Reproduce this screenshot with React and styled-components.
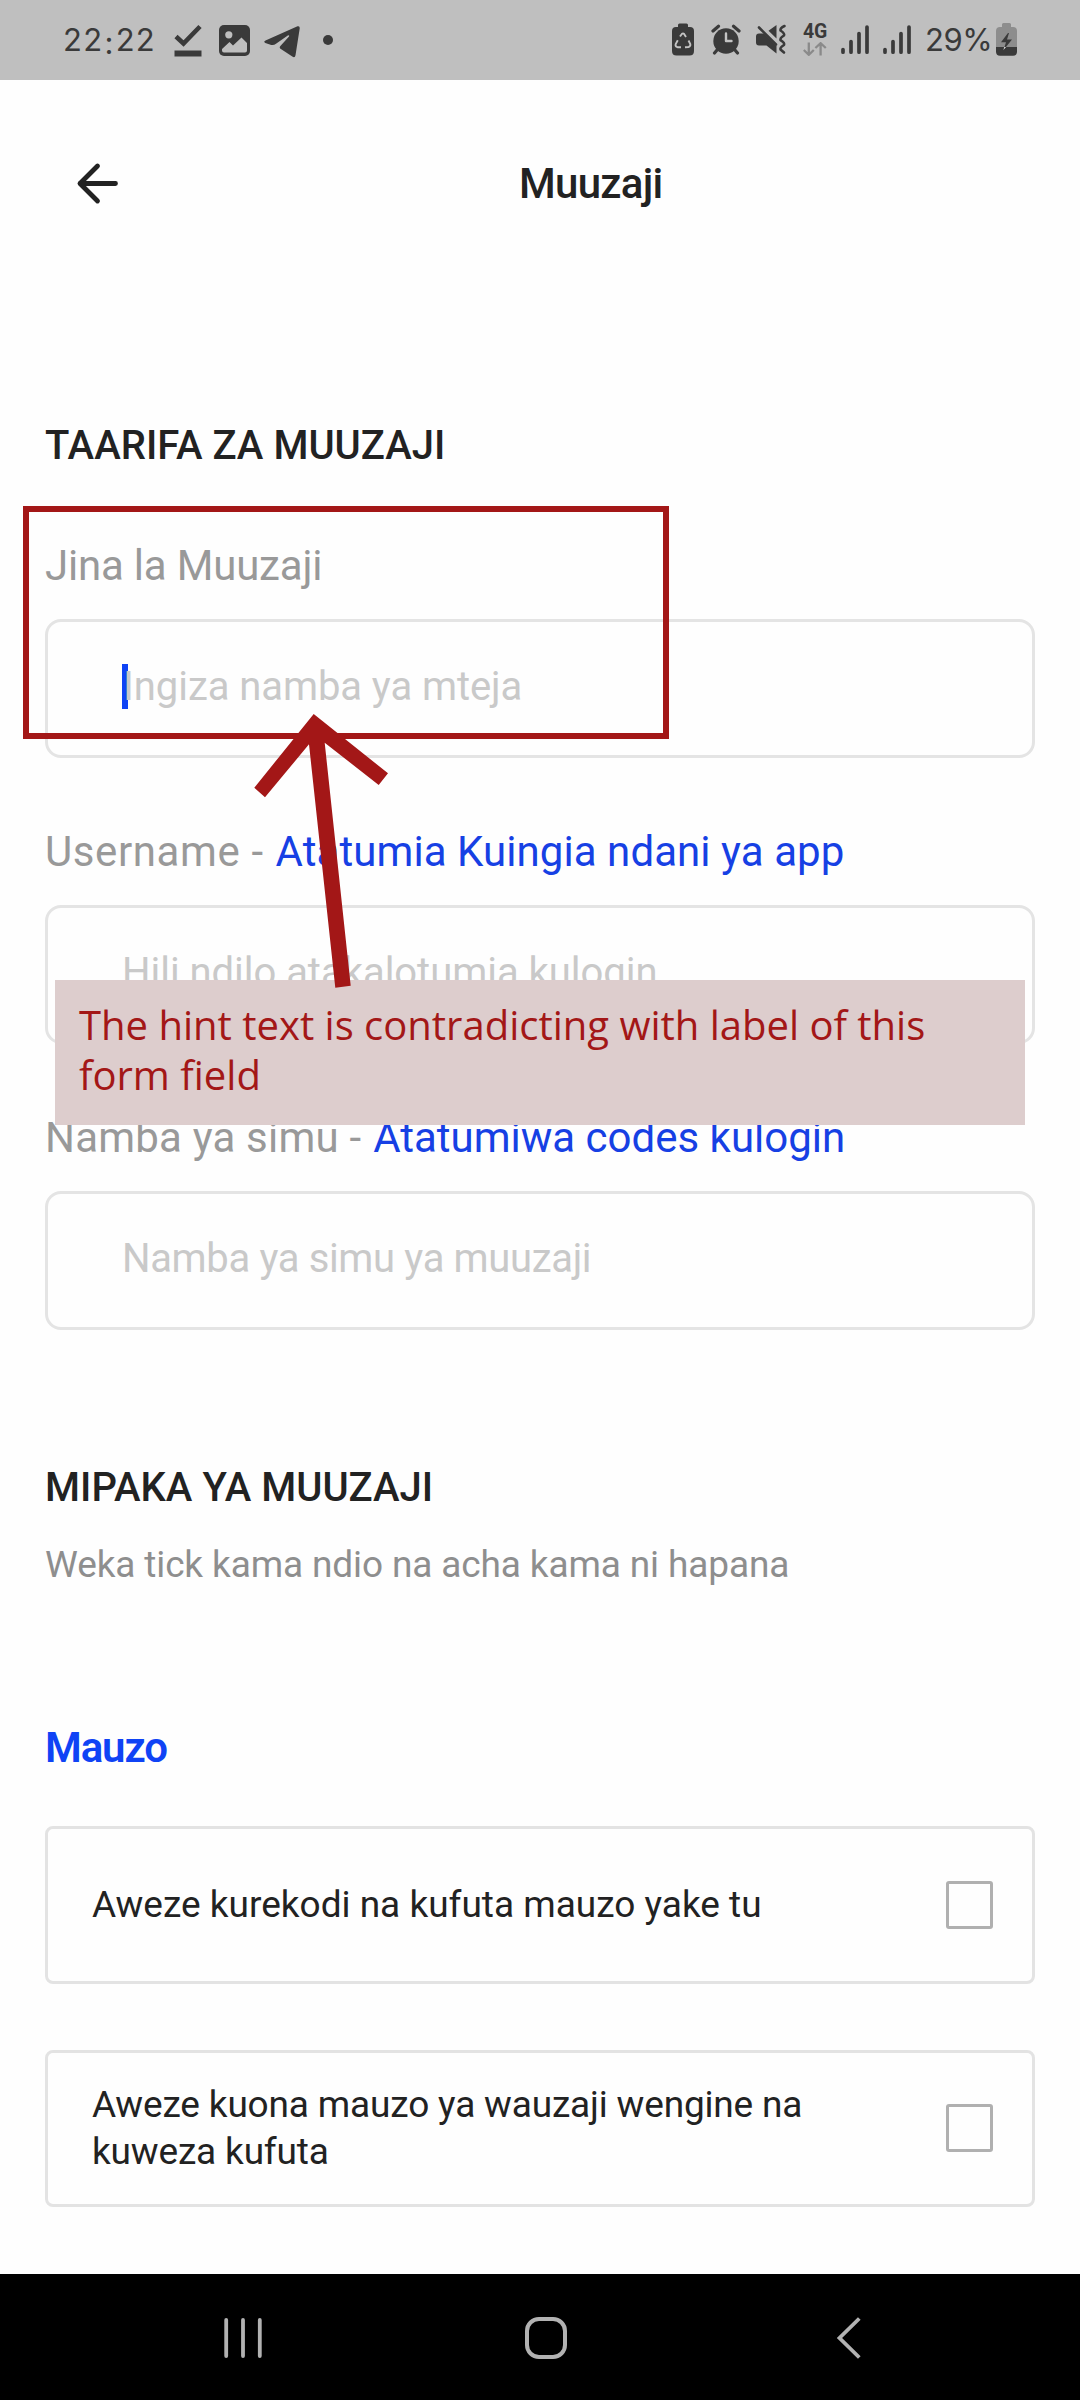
import React from "react";
import styled, { createGlobalStyle } from "styled-components";

const GlobalStyle = createGlobalStyle`
  * { box-sizing: border-box; }
  body {
    margin: 0;
    background: #fefefe;
    font-family: Roboto, "Liberation Sans", sans-serif;
    color: #222;
  }
  svg { display: block; flex: none; }
`;

const Screen = styled.div`
  position: relative;
  width: 1080px;
  height: 2400px;
  overflow: hidden;
  display: flex;
  flex-direction: column;
  background: #fefefe;
`;

/* ---------- status bar ---------- */

const StatusBar = styled.div`
  flex: none;
  height: 80px;
  background: #bfbfbf;
  color: #3a3a3a;
  display: flex;
  justify-content: space-between;
  padding: 0 63px 0 63px;
`;

const StatusGroup = styled.div`
  display: flex;
  align-items: center;
`;

const Clock = styled.span`
  width: 111px;
  font: 400 31px/80px Inter, "Liberation Sans", sans-serif;
  letter-spacing: 1.3px;
  white-space: nowrap;
`;

const Colon = styled.span`
  line-height: 1;
  vertical-align: -3px;
  margin: 0 1px;
`;

const Percent = styled.span`
  width: 71px;
  margin-left: 14px;
  font: 400 31px/80px Inter, "Liberation Sans", sans-serif;
  letter-spacing: -0.4px;
  white-space: nowrap;
`;

const Glyph = styled.svg.attrs((p) => ({
  width: p.$w,
  height: 80,
  viewBox: `0 0 ${p.$w} 80`,
  fill: "none",
}))`
  margin-left: ${(p) => p.$gap || 0}px;
`;

const Network = styled.div`
  display: flex;
  flex-direction: column;
  align-items: center;
  width: 26px;
  height: 80px;
  padding-top: 22px;
  margin-left: 15px;
  font: 700 19.5px/20px Roboto, sans-serif;
  letter-spacing: -0.3px;
`;

const INK = "#3a3a3a";

function DoneIcon() {
  return (
    <Glyph $w={28}>
      <path d="M2 36.5 L9.5 43.5 L26 26.5" stroke={INK} strokeWidth="4.6" />
      <path d="M.5 53.5 H27.5" stroke={INK} strokeWidth="6" />
    </Glyph>
  );
}

function ImageIcon() {
  return (
    <Glyph $w={31} $gap={17}>
      <rect x="0" y="25" width="31" height="31" rx="5" fill={INK} />
      <circle cx="9.8" cy="34.8" r="3.6" fill="#bfbfbf" />
      <path
        d="M3 49 L10.5 42 L14 45.5 L22.5 37.5 L28 43 V50.5 Q28 52.5 26 52.5 H5 Q3 52.5 3 50.5 Z"
        fill="#bfbfbf"
      />
    </Glyph>
  );
}

function TelegramIcon() {
  return (
    <Glyph $w={36} $gap={14}>
      <path
        d="M1.5 40.5 L33.5 26.3 Q36 25.6 35.7 28.5 L31.5 55.3 Q31 58.4 28.3 56.6 L16.5 48.8 Q15 47.6 16.4 46 L25 36.4 Q25.8 34.8 23.8 35.5 L12 43.8 Q9.5 45.6 6.5 44.7 L1.3 43 Q-1 41.8 1.5 40.5 Z"
        fill={INK}
      />
    </Glyph>
  );
}

function RecycleBattery() {
  return (
    <Glyph $w={22}>
      <path
        d="M6 27 V25 Q6 23.5 7.5 23.5 H14.5 Q16 23.5 16 25 V27 H18 Q22 27 22 31 V51 Q22 55.5 17.5 55.5 H4.5 Q0 55.5 0 51 V31 Q0 27 4 27 Z"
        fill={INK}
      />
      <path
        d="M8 36.5 L10 33.8 Q11 33 12 33.8 L14 37 M16.5 40.5 L18.3 44 Q18.8 46.3 16.5 47 L13 47.2 M9 47.2 H5.5 Q3 46.5 3.7 44 L5.8 40.3"
        stroke="#c4c4c4"
        strokeWidth="1.9"
      />
    </Glyph>
  );
}

function AlarmIcon() {
  return (
    <Glyph $w={30} $gap={17}>
      <circle cx="15" cy="41" r="12.7" fill={INK} />
      <path
        d="M2 31 L7.5 26.3 M28 31 L22.5 26.3 M6.5 49.5 L3.5 53 M23.5 49.5 L26.5 53"
        stroke={INK}
        strokeWidth="3.2"
        strokeLinecap="round"
      />
      <path d="M15 33.5 V41 H20.5" stroke="#c4c4c4" strokeWidth="2.4" strokeLinecap="round" strokeLinejoin="round" />
    </Glyph>
  );
}

function MuteIcon() {
  return (
    <Glyph $w={31} $gap={15}>
      <path
        d="M3 33.5 H8 L20.5 46 V53.5 L10.5 45.5 H3 Q0 45.5 0 42.5 V36.5 Q0 33.5 3 33.5 Z M20.5 25 V38.5 L12.5 30.8 Z"
        fill={INK}
      />
      <path d="M3 27.5 L20 44.5" stroke={INK} strokeWidth="2.6" strokeLinecap="round" />
      <path
        d="M28.5 26 Q24 28 24.5 30.5 Q29 33.5 28 35.5 Q23.8 38 24.5 40.2 Q29 43 28 45 Q23.8 47.5 24.5 49.5 L28 52.5"
        stroke={INK}
        strokeWidth="2.6"
        strokeLinecap="round"
        strokeLinejoin="round"
      />
    </Glyph>
  );
}

function DataArrows() {
  return (
    <svg width="24" height="14" viewBox="0 0 24 14" fill="none">
      <path
        d="M5.8 .5 V12.5 M.8 8 L5.8 12.8 L10.8 8 M17.6 13.5 V1.5 M12.4 6 L17.6 1.2 L22.8 6"
        stroke="#8a8a8a"
        strokeWidth="2.3"
      />
    </svg>
  );
}

function SignalIcon({ gap }) {
  return (
    <Glyph $w={28} $gap={gap}>
      <path
        d="M2 49.5 V52.2 M10 41.5 V52.2 M18 33.5 V52.2 M26 27 V52.2"
        stroke={INK}
        strokeWidth="3.7"
        strokeLinecap="round"
      />
    </Glyph>
  );
}

function ChargingBattery() {
  return (
    <Glyph $w={21}>
      <path
        d="M6 27 V24.5 Q6 23 7.5 23 H13.5 Q15 23 15 24.5 V27 H17 Q21 27 21 31 V47 H0 V31 Q0 27 4 27 Z"
        fill="#8d8d8d"
      />
      <path d="M0 47 H21 V51.5 Q21 55.7 17 55.7 H4 Q0 55.7 0 51.5 Z" fill={INK} />
      <path d="M12 33 L5 42.3 H10 L7.5 50 L16 39.6 H11 L13 33 Z" fill={INK} />
      <path d="M8.4 47 H10 L7.2 50.3 Z" fill="#eee" />
    </Glyph>
  );
}

/* ---------- header ---------- */

const Header = styled.header`
  flex: none;
  height: 208px;
  display: flex;
  align-items: center;
  padding-left: 76px;
  gap: 399px;
`;

const Title = styled.h1`
  margin: 0;
  font-size: 42px;
  line-height: 50px;
  font-weight: 500;
  letter-spacing: -0.7px;
`;

/* ---------- form ---------- */

const Content = styled.main`
  flex: 1;
  display: flex;
  flex-direction: column;
  padding: 0 45px;
`;

const SectionTitle = styled.h2`
  margin: 134px 0 0;
  font-size: 40px;
  line-height: 48px;
  font-weight: 500;
  letter-spacing: 0.04px;
`;

const Fields = styled.div`
  display: flex;
  flex-direction: column;
  gap: 69px;
  margin-top: 71px;
`;

const Field = styled.div`
  display: flex;
  flex-direction: column;
  gap: 28px;
`;

const Label = styled.div`
  font-size: 42px;
  line-height: 50px;
  color: #999;
  letter-spacing: ${(p) => p.$track || 0}px;
  white-space: nowrap;
`;

const Accent = styled.span`
  margin-left: ${(p) => p.$gap}px;
  color: #1640e4;
  letter-spacing: ${(p) => p.$track || 0}px;
`;

const Input = styled.div`
  height: 139px;
  display: flex;
  align-items: center;
  padding: 0 77px 4px 74px;
  border: 3px solid #e4e4e4;
  border-radius: 16px;
`;

const Caret = styled.span`
  width: 6px;
  height: 45px;
  margin-right: -5px;
  background: #0f43f5;
`;

const Hint = styled.span`
  font-size: 40px;
  color: #c9c9c9;
  letter-spacing: ${(p) => p.$track || 0}px;
  white-space: nowrap;
`;

const Helper = styled.p`
  margin: 31px 0 0;
  font-size: 37px;
  line-height: 44px;
  letter-spacing: -0.13px;
  color: #8e8e8e;
`;

const GroupTitle = styled.h3`
  margin: 136px 0 0;
  font-size: 42px;
  line-height: 50px;
  font-weight: 600;
  letter-spacing: -1.1px;
  color: #0f43f5;
`;

const Options = styled.div`
  display: flex;
  flex-direction: column;
  gap: 66px;
  margin-top: 53px;
`;

const Option = styled.label`
  height: 157.5px;
  display: flex;
  align-items: center;
  justify-content: space-between;
  padding: 0 39px 0 44px;
  border: 3px solid #e3e3e3;
  border-radius: 8px;
`;

const OptionText = styled.span`
  width: 730px;
  font-size: 37px;
  line-height: 47px;
  letter-spacing: ${(p) => p.$track || 0}px;
`;

const Box = styled.span`
  width: 47px;
  height: 48px;
  border: 3px solid #b0b0b0;
  border-radius: 3px;
`;

/* ---------- review marks ---------- */

const Frame = styled.div`
  position: absolute;
  left: 23px;
  top: 506px;
  width: 646px;
  height: 233px;
  border: 6px solid #a31717;
`;

const Note = styled.div`
  position: absolute;
  left: 55px;
  top: 980px;
  width: 970px;
  height: 145px;
  padding: 20px 24px;
  background: #ddcdcd;
  color: #a31717;
  font: 400 40px/50px "Open Sans", sans-serif;
`;

const Pointer = styled.svg`
  position: absolute;
  left: 250px;
  top: 710px;
`;

/* ---------- navigation bar ---------- */

const NavBar = styled.nav`
  flex: none;
  height: 126px;
  display: grid;
  grid-template-columns: repeat(3, 303px);
  place-items: center;
  padding: 2px 0 0 91px;
  background: #000;
`;

const FIELDS = [
  { label: "Jina la Muuzaji", track: -0.2, hint: "Ingiza namba ya mteja", hintTrack: -0.07, focused: true },
  {
    label: "Username -",
    track: 0.6,
    accent: "Atatumia Kuingia ndani ya app",
    accentTrack: 0.07,
    gap: 12,
    hint: "Hili ndilo atakalotumia kulogin",
    hintTrack: -0.03,
  },
  {
    label: "Namba ya simu -",
    track: 0.2,
    accent: "Atatumiwa codes kulogin",
    gap: 12,
    hint: "Namba ya simu ya muuzaji",
    hintTrack: -0.35,
  },
];

const OPTIONS = [
  { text: "Aweze kurekodi na kufuta mauzo yake tu", track: 0 },
  { text: "Aweze kuona mauzo ya wauzaji wengine na kuweza kufuta", track: -0.17 },
];

export default function App() {
  return (
    <Screen>
      <GlobalStyle />
      <StatusBar>
        <StatusGroup>
          <Clock>
            22<Colon>:</Colon>22
          </Clock>
          <DoneIcon />
          <ImageIcon />
          <TelegramIcon />
          <Glyph $w={10} $gap={23}>
            <circle cx="5" cy="40" r="5" fill={INK} />
          </Glyph>
        </StatusGroup>
        <StatusGroup>
          <RecycleBattery />
          <AlarmIcon />
          <MuteIcon />
          <Network>
            4G
            <DataArrows />
          </Network>
          <SignalIcon gap={13} />
          <SignalIcon gap={14} />
          <Percent>29%</Percent>
          <ChargingBattery />
        </StatusGroup>
      </StatusBar>

      <Header>
        <svg width="44" height="44" viewBox="0 0 44 44" fill="none">
          <path
            d="M39.5 21.5 H4 M21.5 4 L4 21.5 L21.5 39"
            stroke="#222"
            strokeWidth="4.8"
            strokeLinecap="round"
            strokeLinejoin="round"
          />
        </svg>
        <Title>Muuzaji</Title>
      </Header>

      <Content>
        <SectionTitle>TAARIFA ZA MUUZAJI</SectionTitle>
        <Fields>
          {FIELDS.map((f) => (
            <Field key={f.label}>
              <Label $track={f.track}>
                {f.label}
                {f.accent && (
                  <Accent $gap={f.gap} $track={f.accentTrack}>
                    {f.accent}
                  </Accent>
                )}
              </Label>
              <Input>
                {f.focused && <Caret />}
                <Hint $track={f.hintTrack}>{f.hint}</Hint>
              </Input>
            </Field>
          ))}
        </Fields>

        <SectionTitle>MIPAKA YA MUUZAJI</SectionTitle>
        <Helper>Weka tick kama ndio na acha kama ni hapana</Helper>

        <GroupTitle>Mauzo</GroupTitle>
        <Options>
          {OPTIONS.map((o) => (
            <Option key={o.text}>
              <OptionText $track={o.track}>{o.text}</OptionText>
              <Box />
            </Option>
          ))}
        </Options>
      </Content>

      <NavBar>
        <svg width="38" height="42" viewBox="0 0 38 42">
          <path
            d="M2.2 3 V39 M19 3 V39 M35.8 3 V39"
            stroke="#b2b2b2"
            strokeWidth="3.8"
            strokeLinecap="round"
          />
        </svg>
        <svg width="42" height="42" viewBox="0 0 42 42" fill="none">
          <rect x="2" y="2" width="38" height="38" rx="12" stroke="#b2b2b2" strokeWidth="4" />
        </svg>
        <svg width="26" height="42" viewBox="0 0 26 42" fill="none">
          <path d="M23.3 1.5 L3.5 21 L23.3 40.5" stroke="#b2b2b2" strokeWidth="3.8" />
        </svg>
      </NavBar>

      <Frame />
      <Note>The hint text is contradicting with label of this form field</Note>
      <Pointer width="145" height="285" viewBox="250 710 145 285">
        <path
          d="M313.7 714 L254.3 787.7 L265 797.3 L309 744.3 L335.3 987.7 L350.7 985.7 L324.7 742.7 L378.7 785 L388 773.3 Z"
          fill="#a31717"
        />
      </Pointer>
    </Screen>
  );
}
